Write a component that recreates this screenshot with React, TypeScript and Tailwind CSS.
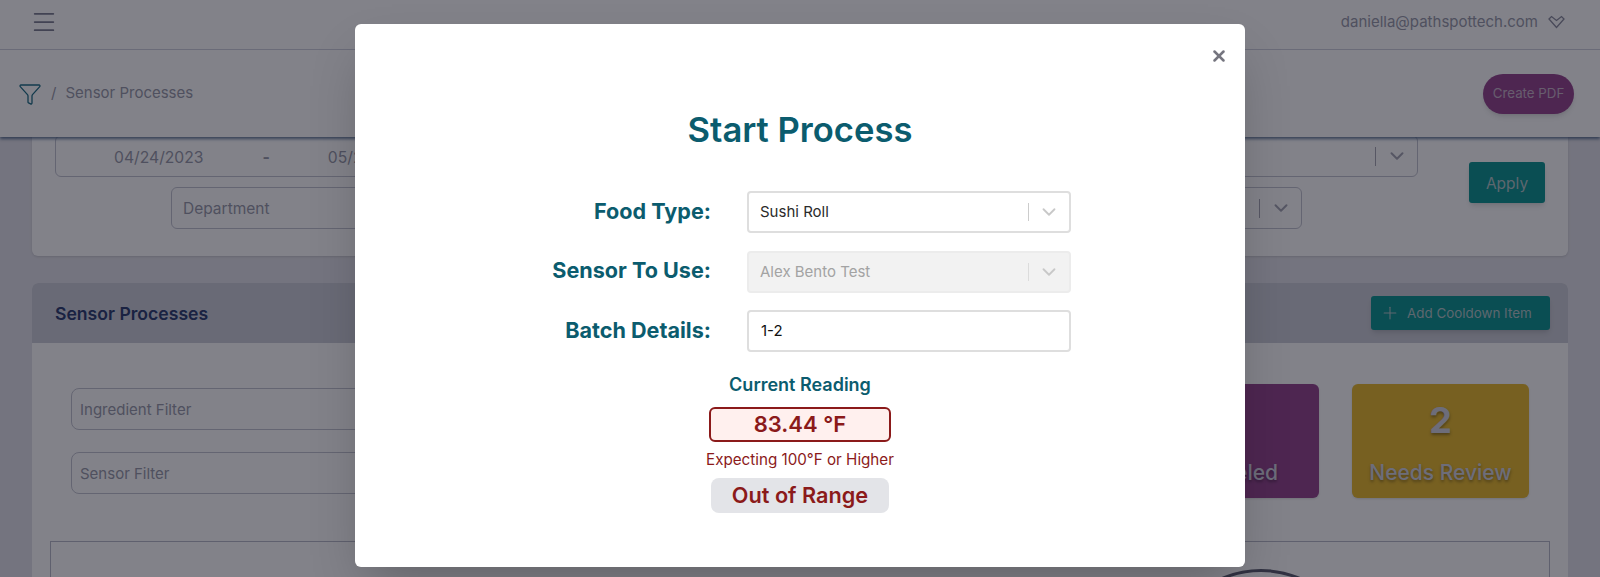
import { ChevronDown, Filter, Plus, Menu, X } from "lucide-react";

const font = { fontFamily: "Inter, 'Noto Sans', sans-serif" };

function Divider() {
  return <span className="h-[19px] w-px bg-[#a8a9b4]" />;
}

function StatCard({ value, label, className }: { value: string; label: string; className: string }) {
  return (
    <div className={`flex h-[114px] w-[177px] flex-col items-center justify-between rounded-md pt-[16px] pb-[11px] text-[#d4d5e0] shadow-sm [text-shadow:0_2px_3px_rgba(0,0,0,0.35)] ${className}`}>
      <span className="text-[36px] leading-[40px] font-bold">{value}</span>
      <span className="text-[21px] leading-[28px] font-medium">{label}</span>
    </div>
  );
}

function Background() {
  return (
    <div className="h-[577px] overflow-hidden bg-[#e3e3ea]">
      {/* fixed top bars */}
      <header className="relative z-10 bg-white shadow-[0_2px_3px_rgba(40,70,110,0.7)]">
        <div className="flex h-[50px] items-center justify-between border-b border-[#cfd1dc] pr-[35px] pb-[6px] pl-[30px]">
          <Menu className="h-[28px] w-[28px] text-[#7e8092]" strokeWidth={1.5} />
          <div className="flex items-center gap-[10px] text-[15px] text-[#999baa]">
            <span className="mt-[1px]">daniella@pathspottech.com</span>
            <svg width="17" height="14" viewBox="0 0 17 14" fill="none" stroke="#8b8d9e" strokeWidth="1.3">
              <path d="M1 4 L3.5 1.5 L8.5 5.5 L13.5 1.5 L16 4 L8.5 12.5 Z" />
            </svg>
          </div>
        </div>
        <div className="flex h-[87px] items-center justify-between pr-[26px] pl-[18px]">
          <div className="flex items-center text-[15px] text-[#999baa]">
            <Filter className="h-[24px] w-[24px] text-[#1f6f86]" strokeWidth={1.3} />
            <span className="ml-[9px]">/</span>
            <span className="ml-[9px]">Sensor Processes</span>
          </div>
          <button className="h-[40px] w-[91px] rounded-full bg-[#96478f] text-[13.3px] text-[#c9b4c9] shadow-md">Create PDF</button>
        </div>
      </header>

      <main className="-mt-[17px] px-[32px]">
        {/* date and department filters */}
        <section className="flex rounded-b-md bg-white pt-[15px] pr-[23px] pb-[27px] pl-[23px] shadow-sm">
          <div className="flex w-[1363px] flex-col items-center gap-[10px]">
            <div className="flex h-[42px] w-full items-center rounded-md border border-[#c3c5d0] pr-[9px] text-[#999baa]">
              <span className="mt-[3px] ml-[58px] text-[15.7px]">04/24/2023</span>
              <span className="mt-[3px] ml-[59px] text-[15.7px] font-bold">-</span>
              <span className="mt-[3px] ml-[58px] text-[15.7px]">05/24/2023</span>
              <span className="ml-auto flex items-center gap-[10px]">
                <Divider />
                <ChevronDown className="h-[22px] w-[22px] text-[#a6a7b4]" strokeWidth={2.2} />
              </span>
            </div>
            <div className="flex h-[42px] w-[1131px] items-center justify-between rounded-md border border-[#c3c5d0] pr-[9px] pl-[11px] text-[15.5px] text-[#999baa]">
              <span className="mt-[2px]">Department</span>
              <span className="flex items-center gap-[10px]">
                <Divider />
                <ChevronDown className="h-[22px] w-[22px] text-[#a6a7b4]" strokeWidth={2.2} />
              </span>
            </div>
          </div>
          <button className="mt-[27px] ml-[51px] h-[41px] w-[76px] rounded-[3px] bg-[#0f9692] pt-[2px] text-[15.5px] text-[#b4c8ca] shadow-md">Apply</button>
        </section>

        {/* sensor processes panel */}
        <section className="mt-[27px] rounded-t-md bg-white">
          <div className="flex h-[60px] items-center justify-between rounded-t-md bg-[#cdcfd8] pr-[18px] pl-[23px]">
            <h2 className="mt-[3px] text-[17.6px] font-semibold text-[#2f3f70]">Sensor Processes</h2>
            <button className="flex h-[34px] w-[179px] items-center gap-[7px] rounded-[3px] bg-[#0f9692] pl-[9px] text-[13.4px] text-[#b4c8ca] shadow-md">
              <Plus className="h-[20px] w-[20px]" strokeWidth={1.3} />
              Add Cooldown Item
            </button>
          </div>
          <div className="px-[18px] pt-[41px]">
            <div className="flex items-start justify-between pr-[21px] pl-[21px]">
              <div className="flex w-[500px] flex-col gap-[22px] pt-[4px]">
                <div className="flex h-[42px] items-center rounded-lg border border-[#c3c5d0] px-[8px] pt-[2px] text-[15px] text-[#999baa]">Ingredient Filter</div>
                <div className="flex h-[42px] items-center rounded-lg border border-[#c3c5d0] px-[8px] pt-[2px] text-[15px] text-[#999baa]">Sensor Filter</div>
              </div>
              <div className="flex gap-[33px]">
                <StatCard value="0" label="Canceled" className="bg-[#96478f]" />
                <StatCard value="2" label="Needs Review" className="bg-[#e8ba2e]" />
              </div>
            </div>
            <div className="mt-[43px] h-[200px] border border-[#b9bbc8] pt-[27px]">
              <div className="ml-[1110px] h-[200px] w-[200px] rounded-full border-[3px] border-[#5c5e70]" />
            </div>
          </div>
        </section>
      </main>
    </div>
  );
}

function Field({ label, children }: { label: string; children: React.ReactNode }) {
  return (
    <div className="flex h-[42px] items-center gap-[36px]">
      <label className="mb-[2px] w-[356px] text-right text-[21.6px] font-bold text-[#0b5c6e]">{label}</label>
      {children}
    </div>
  );
}

function SelectBox({ value, disabled }: { value: string; disabled?: boolean }) {
  return (
    <div className={`flex h-[42px] w-[324px] items-center justify-between rounded-[4px] border-2 pr-[9px] pl-[11px] text-[15px] ${disabled ? "border-[#ececec] bg-[#f2f2f2] text-[#a3a3a3]" : "border-[#dedede] bg-white text-[#2b2b2b]"}`}>
      <span className="mt-[1px]">{value}</span>
      <span className="flex items-center gap-[9px]">
        <span className={`h-[18px] w-px ${disabled ? "bg-[#dcdcdc]" : "bg-[#cccccc]"}`} />
        <ChevronDown className="h-[22px] w-[22px] text-[#c8c8c8]" strokeWidth={2} />
      </span>
    </div>
  );
}

export default function App() {
  return (
    <div style={font} className="relative h-[577px] w-[1600px] overflow-hidden">
      <Background />

      {/* modal backdrop */}
      <div className="absolute inset-0 z-20 bg-[rgba(5,5,20,0.5)]" />

      {/* modal */}
      <div className="absolute top-[24px] left-[355px] z-30 flex h-[543px] w-[890px] flex-col items-center rounded-[6px] bg-white pt-[81px] shadow-2xl">
        <button className="absolute top-[23px] right-[17px] text-[#75757f]">
          <X className="h-[18px] w-[18px]" strokeWidth={3.4} />
        </button>
        <h1 className="text-[34.6px] leading-[48px] font-semibold text-[#0b5c6e]">Start Process</h1>

        <div className="mt-[38px] flex w-full flex-col gap-[17.5px]">
          <Field label="Food Type:">
            <SelectBox value="Sushi Roll" />
          </Field>
          <Field label="Sensor To Use:">
            <SelectBox value="Alex Bento Test" disabled />
          </Field>
          <Field label="Batch Details:">
            <div className="flex h-[42px] w-[324px] items-center rounded-[4px] border-2 border-[#dedede] pl-[12px] text-[15px] text-[#111111]">1-2</div>
          </Field>
        </div>

        <p className="mt-[22px] text-[18px] leading-[22px] font-semibold text-[#0b5c6e]">Current Reading</p>
        <div className="mt-[11px] flex h-[35px] w-[182px] items-center justify-center rounded-md border-2 border-[#8b1a1a] bg-[#fff0ee] text-[22px] font-semibold text-[#8b1a1a]">83.44 °F</div>
        <p className="mt-[8px] text-[15.2px] leading-[20px] text-[#8b1a1a]">Expecting 100°F or Higher</p>
        <div className="mt-[8px] flex h-[35px] w-[178px] items-center justify-center rounded-lg bg-[#e3e4e8] text-[21.7px] font-semibold text-[#8b1a1a]">Out of Range</div>
      </div>
    </div>
  );
}
